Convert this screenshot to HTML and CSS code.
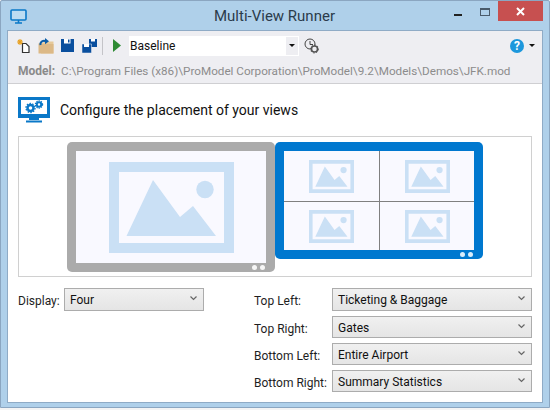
FILE: index.html
```html
<!DOCTYPE html>
<html lang="en">
<head>
<meta charset="utf-8">
<title>Multi-View Runner</title>
<link rel="stylesheet" href="styles.css">
</head>
<body>
<svg class="defs" width="0" height="0" aria-hidden="true">
  <symbol id="pic" viewBox="0 0 125 91">
    <path class="pic-fill" fill-rule="evenodd" d="M0 0H125V91H0ZM10 10V81H115V10Z"/>
    <path class="pic-fill" d="M17.5 74L44 18L71 55L84 44L107 74Z"/>
    <circle class="pic-fill" cx="96" cy="27.5" r="8.7"/>
  </symbol>
</svg>
<div class="window">
  <header class="titlebar">
    <svg class="app-icon" width="17" height="17" viewBox="0 0 17 17">
      <rect x="1" y="2" width="15" height="10" rx="1" fill="#bcdcf2" stroke="#0a78c8" stroke-width="1.6"/>
      <path d="M5 15H12M8.5 12V15" stroke="#0a78c8" stroke-width="1.6" fill="none"/>
    </svg>
    <div class="title">Multi-View Runner</div>
    <div class="controls">
      <span class="ctl ctl-min"></span>
      <span class="ctl ctl-max"></span>
      <span class="ctl-close">
        <svg width="9" height="9" viewBox="0 0 9 9"><path d="M1 1L8 8M8 1L1 8" stroke="#fff" stroke-width="2"/></svg>
      </span>
    </div>
  </header>
  <div class="client">
    <div class="toolbar">
      <svg class="ic ic-new" width="14" height="16" viewBox="0 0 14 16">
        <path d="M6.5 5.5H10L13 8.5V14.500H6.500Z" fill="#fff" stroke="#333" stroke-width="1.200"/>
        <path d="M4 1V7M1 4H7M2 2L6 6M6 2L2 6" stroke="#e8a020" stroke-width="1.100"/>
      </svg>
      <svg class="ic ic-open" width="16" height="16" viewBox="0 0 16 16">
        <path d="M0.500 5H5L6 3.500H15.500V15.500H3Z" fill="#e6c99a"/>
        <path d="M0.500 15.500V6H15.500V15.500Z" fill="#dcb987"/>
        <path d="M2.500 7A3.500 3.500 0 0 1 8 3.500" fill="none" stroke="#0c5ea8" stroke-width="2"/>
        <path d="M7 0L11 3.200L7 6.200Z" fill="#0c5ea8"/>
      </svg>
      <svg class="ic ic-save" width="13" height="13" viewBox="0 0 13 13">
        <path d="M0 0H13V13H0Z" fill="#0a4f9e"/>
        <path d="M3 0H9.500V4.500H3Z" fill="#fff"/>
        <path d="M7 0.500H8.500V3.500H7Z" fill="#0a4f9e"/>
      </svg>
      <svg class="ic ic-saveall" width="15" height="14" viewBox="0 0 15 14">
        <path d="M7 0H15V8H7Z" fill="#0a4f9e"/>
        <path d="M9 0H13V2.500H9Z" fill="#fff"/>
        <path d="M0 5H9.500V14H0Z" fill="#0a4f9e" stroke="#eeeef2" stroke-width="0.500"/>
        <path d="M2 5H7V8H2Z" fill="#fff"/>
      </svg>
      <span class="tb-sep"></span>
      <svg class="ic ic-play" width="8" height="13" viewBox="0 0 8 13"><path d="M0 0L8 6.500L0 13Z" fill="#2e8b34"/></svg>
      <div class="combo">
        <span class="combo-text">Baseline</span>
        <span class="combo-btn"><span class="caret"></span></span>
      </div>
      <svg class="ic ic-hist" width="15" height="16" viewBox="0 0 15 16">
        <circle cx="6" cy="6" r="5" fill="none" stroke="#444" stroke-width="1"/>
        <path d="M6 3V6.500H9" fill="none" stroke="#444" stroke-width="1"/>
        <circle cx="10.500" cy="11" r="3" fill="#eeeef2" stroke="#555" stroke-width="1.500"/>
        <circle cx="10.500" cy="11" r="4" fill="none" stroke="#555" stroke-width="1" stroke-dasharray="1.500 1.500"/>
      </svg>
      <span class="tb-spacer"></span>
      <span class="help">?</span>
      <span class="caret help-caret"></span>
    </div>
    <div class="modelrow"><b class="model-label">Model:</b> <span class="model-path">C:\Program Files (x86)\ProModel Corporation\ProModel\9.2\Models\Demos\JFK.mod</span></div>
    <main class="main">
      <div class="heading">
        <svg class="heading-icon" width="32" height="26" viewBox="0 0 32 26">
          <rect x="1.500" y="1.500" width="29" height="18" fill="#fff" stroke="#0a78c8" stroke-width="3"/>
          <path d="M0 17H32V21H0ZM11 21H21V23H11ZM8 23.500H24V25.500H8Z" fill="#0a78c8"/>
          <circle cx="12.500" cy="11" r="3" fill="none" stroke="#0a78c8" stroke-width="2.400"/>
          <circle cx="21" cy="7.500" r="2.200" fill="none" stroke="#0a78c8" stroke-width="2"/>
          <circle cx="12.500" cy="11" r="4.500" fill="none" stroke="#0a78c8" stroke-width="1.400" stroke-dasharray="1.500 1.300"/>
          <circle cx="21" cy="7.500" r="3.600" fill="none" stroke="#0a78c8" stroke-width="1.200" stroke-dasharray="1.300 1"/>
        </svg>
        <span class="heading-text">Configure the placement of your views</span>
      </div>
      <div class="stage">
        <div class="tablet tablet-gray">
          <div class="screen screen-single">
            <svg class="pic-lg"><use href="#pic"/></svg>
          </div>
          <div class="tablet-foot"><i class="dot"></i><i class="dot"></i></div>
        </div>
        <div class="tablet tablet-blue">
          <div class="screen screen-quad">
            <div class="cell cell-t cell-l"><svg class="pic-sm"><use href="#pic"/></svg></div>
            <div class="cell cell-t"><svg class="pic-sm"><use href="#pic"/></svg></div>
            <div class="cell cell-l"><svg class="pic-sm"><use href="#pic"/></svg></div>
            <div class="cell"><svg class="pic-sm"><use href="#pic"/></svg></div>
          </div>
          <div class="tablet-foot"><i class="dot dot-blue"></i><i class="dot dot-blue"></i></div>
        </div>
      </div>
      <div class="form">
        <div class="display-field">
          <span class="lbl lbl-display">Display:</span>
          <div class="select select-display select-tall"><span>Four</span><svg class="chev" width="7" height="5" viewBox="0 0 7 5"><path d="M0.500 0.500L3.500 3.500L6.500 0.500" fill="none" stroke="#666" stroke-width="1.200"/></svg></div>
        </div>
        <div class="assign">
          <span class="lbl">Top Left:</span>
          <div class="select select-tall"><span>Ticketing &amp; Baggage</span><svg class="chev" width="7" height="5" viewBox="0 0 7 5"><path d="M0.500 0.500L3.500 3.500L6.500 0.500" fill="none" stroke="#666" stroke-width="1.200"/></svg></div>
          <span class="lbl">Top Right:</span>
          <div class="select"><span>Gates</span><svg class="chev" width="7" height="5" viewBox="0 0 7 5"><path d="M0.500 0.500L3.500 3.500L6.500 0.500" fill="none" stroke="#666" stroke-width="1.200"/></svg></div>
          <span class="lbl">Bottom Left:</span>
          <div class="select"><span>Entire Airport</span><svg class="chev" width="7" height="5" viewBox="0 0 7 5"><path d="M0.500 0.500L3.500 3.500L6.500 0.500" fill="none" stroke="#666" stroke-width="1.200"/></svg></div>
          <span class="lbl">Bottom Right:</span>
          <div class="select"><span>Summary Statistics</span><svg class="chev" width="7" height="5" viewBox="0 0 7 5"><path d="M0.500 0.500L3.500 3.500L6.500 0.500" fill="none" stroke="#666" stroke-width="1.200"/></svg></div>
        </div>
      </div>
    </main>
  </div>
</div>
</body>
</html>
```

FILE: styles.css
```css
* { box-sizing: border-box; }
html, body { margin: 0; padding: 0; }
body {
  width: 550px;
  height: 410px;
  background: #f4f4f4;
  font-family: Roboto, "Noto Sans", sans-serif;
  font-size: 12px;
  color: #1e1e1e;
  overflow: hidden;
}
.defs { display: block; height: 0; }
.pic-fill { fill: #cae0f5; }

.window {
  width: 550px;
  height: 408px;
  border: 1px solid #8ba6c1;
  border-radius: 2px 2px 0 0;
  background: #afd0ea;
  padding: 0 6px 4px;
  display: flex;
  flex-direction: column;
}

.titlebar {
  height: 29px;
  flex: none;
  display: flex;
  align-items: flex-start;
  margin-right: 0;
}
.app-icon { margin: 7px 0 0 3px; flex: none; }
.title {
  flex: 1;
  text-align: center;
  font-size: 15px;
  line-height: 30px;
  color: #2b3b4b;
  padding-left: 68px;
}
.controls { display: flex; align-items: flex-start; flex: none; }
.ctl { display: block; flex: none; }
.ctl-min { width: 8px; height: 2px; background: #222; margin: 13px 18px 0 0; }
.ctl-max { width: 10px; height: 8px; border: 1px solid #4a5b6b; border-top-width: 2px; margin: 7px 8px 0 0; }
.ctl-close {
  width: 45px;
  height: 20px;
  background: #c75050;
  display: flex;
  align-items: center;
  justify-content: center;
}

.client {
  flex: 1;
  display: flex;
  flex-direction: column;
  background: #fff;
  border: 1px solid #8fabc6;
  min-height: 0;
}

.toolbar {
  height: 29px;
  flex: none;
  background: #eeeef2;
  display: flex;
  align-items: center;
}
.ic { flex: none; display: block; }
.ic-new { margin-left: 8px; }
.ic-open { margin-left: 8px; }
.ic-save { margin-left: 7px; }
.ic-saveall { margin-left: 8px; }
.tb-sep { width: 1px; height: 18px; background: #c4c4c8; margin-left: 5px; flex: none; }
.ic-play { margin-left: 10px; }
.combo {
  width: 170px;
  height: 20px;
  margin-left: 8px;
  flex: none;
  display: flex;
  border: 1px solid #fff;
  background: #fff;
}
.combo-text { flex: 1; line-height: 18px; padding-left: 0; color: #111; }
.combo-btn { width: 12px; background: #eeeef2; display: flex; align-items: center; justify-content: center; }
.caret {
  display: block;
  width: 0;
  height: 0;
  border-left: 3px solid transparent;
  border-right: 3px solid transparent;
  border-top: 3px solid #111;
}
.ic-hist { margin-left: 5px; }
.tb-spacer { flex: 1; }
.help {
  width: 14px;
  height: 14px;
  border-radius: 50%;
  background: #1c97dc;
  color: #fff;
  font-weight: 700;
  font-size: 12px;
  line-height: 14px;
  text-align: center;
  flex: none;
}
.help-caret { margin: 0 7px 0 5px; flex: none; }

.modelrow {
  height: 24px;
  flex: none;
  background: #eeeef2;
  border-bottom: 1px solid #cfcfd2;
  padding-left: 10px;
  line-height: 23px;
  color: #8c8c8c;
  white-space: nowrap;
}
.model-label { color: #8a8a8a; margin-right: 3px; }
.model-path { font-size: 11.7px; }

.main { flex: 1; padding: 13px 10px 0; min-height: 0; }

.heading { display: flex; align-items: center; height: 26px; }
.heading-icon { flex: none; display: block; }
.heading-text { margin-left: 10px; font-size: 14px; color: #111; line-height: 24px; }

.stage {
  margin-top: 13px;
  height: 141px;
  border: 1px solid #d0d0d0;
  padding-top: 5px;
  display: flex;
  justify-content: center;
  align-items: flex-start;
}
.tablet { width: 208px; border-radius: 5px; padding: 9px 9px 0; flex: none; }
.tablet-gray { background: #ababab; }
.tablet-blue { background: #0078cf; }
.screen { width: 190px; background: #f9f9ff; }
.screen-single { height: 112px; display: flex; justify-content: center; padding-top: 11px; }
.screen-quad {
  height: 99px;
  display: grid;
  grid-template-columns: 96px 94px;
  grid-template-rows: 51px 48px;
}
.pic-lg { width: 125px; height: 91px; display: block; }
.cell { display: flex; align-items: center; justify-content: center; }
.cell-t { border-bottom: 1px solid #808080; }
.cell-l { border-right: 1px solid #808080; }
.pic-sm { width: 45px; height: 33px; display: block; }
.tablet-foot { height: 9px; display: flex; justify-content: flex-end; align-items: center; gap: 3px; padding-right: 1px; }
.dot { width: 5px; height: 5px; border-radius: 50%; background: #f6f6f6; display: block; }
.dot-blue { background: #d8ecfa; }

.form { margin-top: 11px; display: flex; justify-content: space-between; align-items: flex-start; }
.display-field { display: flex; align-items: center; }
.lbl { color: #1e1e1e; line-height: 16px; padding-top: 3px; white-space: nowrap; }
.lbl-display { width: 46px; flex: none; }
.assign {
  width: 278px;
  display: grid;
  grid-template-columns: 78px 200px;
  row-gap: 5px;
  align-items: center;
}
.select {
  height: 22px;
  border: 1px solid #acacac;
  background: linear-gradient(#f0f0f0, #e5e5e5);
  padding: 1px 6px 0 5px;
  display: flex;
  align-items: center;
  justify-content: space-between;
  color: #111;
}
.select span { line-height: 18px; }
.select-tall { height: 23px; padding-top: 0; }
.select-display { width: 140px; }
.chev { display: block; flex: none; margin-top: -3px; }
```
